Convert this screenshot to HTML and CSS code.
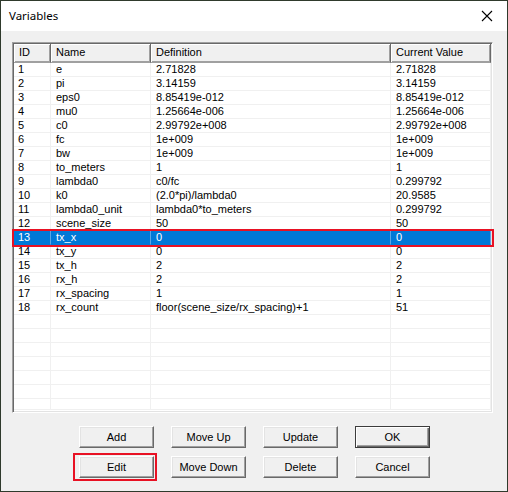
FILE: index.html
```html
<!DOCTYPE html>
<html>
<head>
<meta charset="utf-8">
<link rel="stylesheet" href="styles.css">
</head>
<body>
<div class="window">
  <div class="titlebar">
    <span class="title">Variables</span>
    <svg class="close" width="12" height="12" viewBox="0 0 12 12"><path d="M1 1L11 11M11 1L1 11" stroke="#000" stroke-width="1.1" fill="none"/></svg>
  </div>
  <div class="client">
    <div class="list">
      <div class="hdr">
        <div class="h c-id">ID</div>
        <div class="h c-name">Name</div>
        <div class="h c-def">Definition</div>
        <div class="h c-val">Current Value</div>
      </div>
      <div class="rows">
        <div class="row"><div class="c c-id">1</div><div class="c c-name">e</div><div class="c c-def">2.71828</div><div class="c c-val">2.71828</div></div>
        <div class="row"><div class="c c-id">2</div><div class="c c-name">pi</div><div class="c c-def">3.14159</div><div class="c c-val">3.14159</div></div>
        <div class="row"><div class="c c-id">3</div><div class="c c-name">eps0</div><div class="c c-def">8.85419e-012</div><div class="c c-val">8.85419e-012</div></div>
        <div class="row"><div class="c c-id">4</div><div class="c c-name">mu0</div><div class="c c-def">1.25664e-006</div><div class="c c-val">1.25664e-006</div></div>
        <div class="row"><div class="c c-id">5</div><div class="c c-name">c0</div><div class="c c-def">2.99792e+008</div><div class="c c-val">2.99792e+008</div></div>
        <div class="row"><div class="c c-id">6</div><div class="c c-name">fc</div><div class="c c-def">1e+009</div><div class="c c-val">1e+009</div></div>
        <div class="row"><div class="c c-id">7</div><div class="c c-name">bw</div><div class="c c-def">1e+009</div><div class="c c-val">1e+009</div></div>
        <div class="row"><div class="c c-id">8</div><div class="c c-name">to_meters</div><div class="c c-def">1</div><div class="c c-val">1</div></div>
        <div class="row"><div class="c c-id">9</div><div class="c c-name">lambda0</div><div class="c c-def">c0/fc</div><div class="c c-val">0.299792</div></div>
        <div class="row"><div class="c c-id">10</div><div class="c c-name">k0</div><div class="c c-def">(2.0*pi)/lambda0</div><div class="c c-val">20.9585</div></div>
        <div class="row"><div class="c c-id">11</div><div class="c c-name">lambda0_unit</div><div class="c c-def">lambda0*to_meters</div><div class="c c-val">0.299792</div></div>
        <div class="row"><div class="c c-id">12</div><div class="c c-name">scene_size</div><div class="c c-def">50</div><div class="c c-val">50</div></div>
        <div class="row sel"><div class="c c-id">13</div><div class="c c-name">tx_x</div><div class="c c-def">0</div><div class="c c-val">0</div><div class="mark"></div></div>
        <div class="row"><div class="c c-id">14</div><div class="c c-name">tx_y</div><div class="c c-def">0</div><div class="c c-val">0</div></div>
        <div class="row"><div class="c c-id">15</div><div class="c c-name">tx_h</div><div class="c c-def">2</div><div class="c c-val">2</div></div>
        <div class="row"><div class="c c-id">16</div><div class="c c-name">rx_h</div><div class="c c-def">2</div><div class="c c-val">2</div></div>
        <div class="row"><div class="c c-id">17</div><div class="c c-name">rx_spacing</div><div class="c c-def">1</div><div class="c c-val">1</div></div>
        <div class="row"><div class="c c-id">18</div><div class="c c-name">rx_count</div><div class="c c-def">floor(scene_size/rx_spacing)+1</div><div class="c c-val">51</div></div>
        <div class="row"><div class="c c-id"></div><div class="c c-name"></div><div class="c c-def"></div><div class="c c-val"></div></div>
        <div class="row"><div class="c c-id"></div><div class="c c-name"></div><div class="c c-def"></div><div class="c c-val"></div></div>
        <div class="row"><div class="c c-id"></div><div class="c c-name"></div><div class="c c-def"></div><div class="c c-val"></div></div>
        <div class="row"><div class="c c-id"></div><div class="c c-name"></div><div class="c c-def"></div><div class="c c-val"></div></div>
        <div class="row"><div class="c c-id"></div><div class="c c-name"></div><div class="c c-def"></div><div class="c c-val"></div></div>
        <div class="row"><div class="c c-id"></div><div class="c c-name"></div><div class="c c-def"></div><div class="c c-val"></div></div>
        <div class="row last"><div class="c c-id"></div><div class="c c-name"></div><div class="c c-def"></div><div class="c c-val"></div></div>
      </div>
    </div>
    <div class="buttons">
      <div class="btn">Add</div>
      <div class="btn">Move Up</div>
      <div class="btn">Update</div>
      <div class="btn default">OK</div>
      <div class="btn marked">Edit<span class="mark-btn"></span></div>
      <div class="btn">Move Down</div>
      <div class="btn">Delete</div>
      <div class="btn">Cancel</div>
    </div>
  </div>
</div>
</body>
</html>
```
FILE: styles.css
```css
* { box-sizing: border-box; }
html, body { margin: 0; padding: 0; }
body {
  background: #2f3a2c;
  width: 508px;
  height: 492px;
  overflow: hidden;
  font-family: "Liberation Sans", Arial, sans-serif;
  font-size: 11px;
  color: #000;
}
.window {
  margin: 1px;
  width: 506px;
  height: 490px;
  background: #f0f0f0;
  display: flex;
  flex-direction: column;
}
.titlebar {
  height: 30px;
  background: #fff;
  display: flex;
  align-items: center;
  justify-content: space-between;
  padding: 0 14px 0 8px;
}
.title {
  font-family: "Noto Sans", "Liberation Sans", sans-serif;
  font-size: 11.5px;
  color: #000;
  margin-top: -1px;
}
.close { display: block; margin-top: -1px; }
.client {
  flex: 1;
  padding: 11px 0 0 11px;
}
.list {
  width: 481px;
  height: 371px;
  background: #fff;
  border: 1px solid;
  border-color: #a0a0a0 #fff #fff #a0a0a0;
  box-shadow: inset 1px 1px #696969, inset -1px -1px #e3e3e3;
  padding: 1px;
}
.hdr {
  display: flex;
  height: 19px;
}
.h {
  height: 19px;
  line-height: 17px;
  padding-left: 5px;
  background: #f0f0f0;
  border-right: 1px solid #696969;
  border-bottom: 1px solid #a0a0a0;
  box-shadow: inset 1px 1px #fff, inset -1px -1px #a0a0a0;
  white-space: nowrap;
  overflow: hidden;
}
.c-id { width: 37px; flex: none; }
.c-name { width: 100px; flex: none; }
.c-def { width: 240px; flex: none; }
.c-val { width: 100px; flex: none; }
.rows { height: 347px; }
.row {
  display: flex;
  height: 14px;
  position: relative;
}
.row.last, .row.last .c { height: 11px; }
.c {
  height: 14px;
  line-height: 13px;
  padding-left: 4px;
  border-right: 1px solid #f0f0f0;
  border-bottom: 1px solid #f0f0f0;
  white-space: nowrap;
  overflow: hidden;
}
.c-name.c, .c-def.c, .c-val.c { padding-left: 5px; }
.row.sel { background: #0078d7; color: #fff; z-index: 2; }
.row.sel .c { border-color: #5aa6e6; border-bottom-color: #0078d7; }
.mark {
  position: absolute;
  left: -2px;
  right: -3px;
  top: -2px;
  bottom: -2px;
  border: 2px solid #e81123;
}
.buttons {
  display: grid;
  grid-template-columns: repeat(4, 75px);
  grid-auto-rows: 22px;
  column-gap: 17px;
  row-gap: 8px;
  margin: 13px 0 0 67px;
}
.btn {
  position: relative;
  background: #f0f0f0;
  border: 1px solid;
  border-color: #fff #696969 #696969 #fff;
  box-shadow: inset -1px -1px #a0a0a0, inset 1px 1px #e3e3e3;
  display: flex;
  align-items: center;
  justify-content: center;
  font-size: 11px;
  color: #000;
}
.btn.default {
  border: 1px solid #3c3c3c;
  box-shadow: inset 1px 1px #fff, inset -1px -1px #696969, inset -2px -2px #a0a0a0;
}
.mark-btn {
  position: absolute;
  left: -7px;
  right: -4px;
  top: -4px;
  bottom: -4px;
  border: 2px solid #e81123;
}
```
